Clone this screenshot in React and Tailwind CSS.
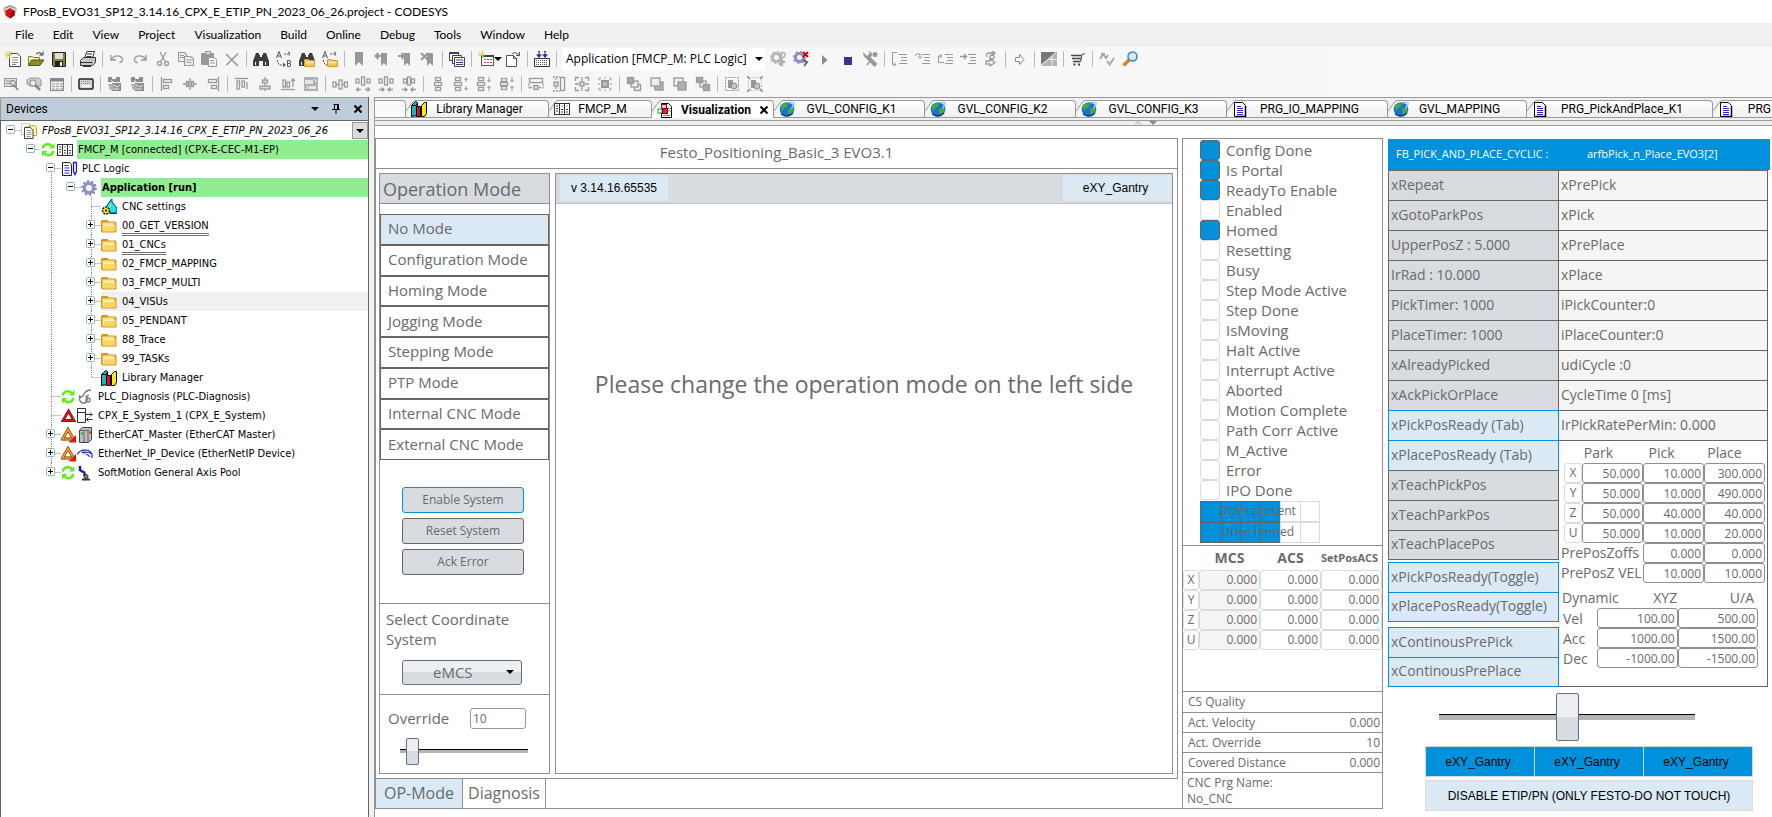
import React from "react";

const G = "#989898";
const D = "#555";

function Svg({ children, w = 16, h = 16, className = "" }) {
  return (
    <svg width={w} height={h} viewBox={`0 0 ${w} ${h}`} fill="none" className={`shrink-0 ${className}`} aria-hidden="true">
      {children}
    </svg>
  );
}

const pageLines = (c) => <path d="M5.5 7.5h5M5.5 9.500h5M5.5 11.500h5M5.5 13.500h4" stroke={c} />;
const binoc = (
  <g fill="#3c3c3c">
    <path d="M3 2h3v2h1v2h2V4h1V2h3l3 8v5h-6v-5H6v5H0v-5z" />
    <path d="M2.500 11v3M12.500 11v3" stroke="#fff" />
  </g>
);
const abSwap = (
  <g>
    <path d="M.5 7L3 .5 5.500 7M1.500 5h3" stroke={D} />
    <path d="M11.500 9.500v6H14q1.500-1.500 0-3h-2.500M11.500 9.500H14q1.300 1.500 0 3" stroke={D} />
    <path d="M8 3h4l2-1M12 1l2 1-1 3M1.500 9v2l2 3h3" stroke={D} strokeDasharray="2 1" />
    <path d="M7 11.500l3 2.500-3 2z" fill={D} />
  </g>
);
const folderBadge = (
  <g>
    <path d="M5.500 8.500h4l1 1h5v6h-10z" fill="#f6c85a" stroke="#d99a2b" />
    <path d="M6.500 11.500h8" stroke="#fdeeb8" strokeWidth="1.500" />
  </g>
);
const bookmark = <path d="M4 1h8v14l-4-4-4 4z" fill={G} />;
const boxV = (y, x = 5, w = 6, h = 3) => <rect x={x + 0.5} y={y + 0.5} width={w - 1} height={h} stroke={G} strokeWidth="1.300" />;
const stepLines = <path d="M8 3.500h8M10 6.500h6M10 9.500h6M8 12.500h8" stroke={G} />;
const gear = (c) => (
  <g>
    <circle cx="6.500" cy="6.500" r="4" stroke={c} strokeWidth="3" />
    <circle cx="6.500" cy="6.500" r="5.800" stroke={c} strokeWidth="1.500" strokeDasharray="2.200 2.300" />
  </g>
);

const T = {
  new: <g><path d="M4.500 2.500h8l3 3v10h-11z" fill="#fff" stroke="#444" /><path d="M7 6.500h6M7 9h6M7 11.500h6M7 13.500h4" stroke="#888" /><path d="M0 .5l6 6M4.500 0v7M0 4h7M1 7.500L7 1" stroke="#c3c032" /></g>,
  open: <g><path d="M.5 14.500v-9h4l1 1h6v3" fill="#f3efa2" stroke="#85802c" /><path d="M.5 14.500l3-5.500h12.500l-4 5.500z" fill="#8d8a30" stroke="#55521c" /><path d="M8 3q3-3 6 0M15 .5v3.500h-3.500" stroke="#333" /></g>,
  save: <g><path d="M1.500 1.500h13v14h-12l-1-1z" fill="#85812f" stroke="#222" /><rect x="4" y="2" width="8" height="6" fill="#ddd" /><rect x="4" y="10" width="8" height="5" fill="#222" /><rect x="9" y="11" width="2" height="4" fill="#fff" /></g>,
  print: <g><path d="M4.500 7L7 .5h7.500L12.500 7" fill="#fff" stroke="#333" /><path d="M.5 9.500l3-3h12v5l-3 3H.500z" fill="#c8c8c8" stroke="#333" /><path d="M1 11.500h11.500M7 3h5M6.500 5.500h5M3 15.500h8" stroke="#333" /><path d="M11 9.500h2" stroke="#c9b21c" /></g>,
  undo: <path d="M2 4v5h5M2.500 8.500C5 4 12 3.500 13.500 8c.5 2-1 3.500-3 3.500" stroke={G} strokeWidth="1.300" />,
  redo: <path d="M14 4v5H9M13.500 8.500C11 4 4 3.500 2.500 8c-.5 2 1 3.500 3 3.500" stroke={G} strokeWidth="1.300" />,
  cut: <g stroke={G} strokeWidth="1.300"><path d="M5 1l5 9M11 1l-5 9" /><circle cx="4.500" cy="12.500" r="2" /><circle cx="11.500" cy="12.500" r="2" /></g>,
  copy: <g stroke={G} strokeWidth="1.200" fill="#eee"><path d="M.5 1.500h6l2 2v7h-8z" /><path d="M6.500 5.500h6l3 2.500v6.500h-9z" /><path d="M2 4.500h4M2 6.500h4M8.500 9h5M8.500 11.500h5" /></g>,
  paste: <g><rect x="0" y="2" width="13" height="12" rx="1" fill={G} /><rect x="4.500" y=".5" width="5" height="3" fill="#ddd" stroke={G} /><path d="M7.500 6.500h5.500l2.500 2v7h-8z" fill="#f4f4f4" stroke={G} /><path d="M9 9.500h4M9 12h5" stroke={G} /></g>,
  del: <path d="M2 3l12 12M14 2.500L2.500 14" stroke={G} strokeWidth="1.600" />,
  find: binoc,
  replace: abSwap,
  findF: <g>{binoc}{folderBadge}</g>,
  replaceF: <g>{abSwap}{folderBadge}</g>,
  bm: bookmark,
  bmPrev: <g><path d="M7 2h6v13l-3-3-3 3z" fill={G} /><path d="M8 5H2M4.500 2L1.500 5l3 3" stroke={G} strokeWidth="2" /></g>,
  bmNext: <g><path d="M7 2h6v13l-3-3-3 3z" fill={G} /><path d="M1 5h6M4.500 2l3 3-3 3" stroke={G} strokeWidth="2" /></g>,
  bmClear: <g><path d="M7 2h6v13l-3-3-3 3z" fill={G} /><path d="M1 2l7 7M8 2L1 9" stroke={G} strokeWidth="2" /></g>,
  windows: <g stroke="#444"><path d="M.5 1.500h9v8h-9z" fill="#fff" /><path d="M.5 2h9" strokeWidth="2" /><path d="M3.500 4.500h9v8h-9z" fill="#fff" /><path d="M5.500 6.500h10v9h-10z" fill="#fff" /><path d="M7 9h7M7 11.500h7M7 13.500h7" stroke="#3a3a9a" /></g>,
  gridNew: <g><rect x="3.500" y="4.500" width="12" height="10" fill="#fff" stroke="#555" /><path d="M3 5h13" stroke="#444" strokeWidth="2" /><path d="M6 8.500h8" stroke="#27a" strokeDasharray="2 1" /><path d="M6 11.500h8" stroke="#c44" strokeDasharray="2 1" /><path d="M0 .5l6 6M4.500 0v7M0 4h7" stroke="#d4c71f" /></g>,
  page: <g stroke="#555"><path d="M1.500 4.500h7l3 3v8h-10z" fill="#fff" /><path d="M8.500 4.500v3h3M7 3q3-3 7 1M14.500 1v3.500H11" /></g>,
  build: <g><path d="M.5 7.500h15v8H.500z" fill="#fff" stroke="#333" /><path d="M2 9.500h12M2 11.500h12M2 13.500h12" stroke="#555" strokeDasharray="1 1" /><path d="M5 0v4M11 0v4" stroke="#338" strokeWidth="2" strokeDasharray="1.500 1" /><path d="M2 3.500h6l-3 3.500zM8 3.500h6l-3 3.500z" fill="#223399" /></g>,
  login: <g>{gear("#b8b8b8")}<circle cx="12.500" cy="4" r="2.500" stroke="#b0b0b0" strokeWidth="1.500" /><path d="M10 9l4 2-4 2 3 2" stroke="#aaa" strokeWidth="2" /></g>,
  logout: <g>{gear("#8c8fc4")}<path d="M10 1l5 5M15 1l-5 5" stroke="#d40000" strokeWidth="2" /><path d="M10 9l4 2-3 4" stroke="#666" strokeWidth="2" /></g>,
  play: <path d="M6 4v10l5.500-5z" fill="#8a8a8a" />,
  stop: <rect x="5" y="6" width="8" height="8" fill="#33339b" />,
  wrench: <g><path d="M6 6.500l8 8" stroke={G} strokeWidth="4" /><path d="M1 1l4 4 3-3-2-2q4 0 4 4-1 4-5 4-4-2-4-7z" fill={G} /><circle cx="13" cy="3.500" r="2.500" fill={G} /><path d="M8 10l-3 4" stroke={G} strokeWidth="1.500" /></g>,
  st1: <g>{stepLines}<path d="M6 1.500H1.500v12h3M3 11.500l2 2-2 2" stroke={G} /></g>,
  st2: <g>{stepLines}<path d="M1 5q1-3 5-2v4M4 5.500l2 2 2-2" stroke={G} /></g>,
  st3: <g>{stepLines}<path d="M7 11.500H1.500V5h3M3 3l2 2-2 2" stroke={G} /></g>,
  st4: <g>{stepLines}<path d="M0 5.500h6.500M4 3l2.500 2.500L4 8" stroke={G} strokeWidth="1.300" /></g>,
  st5: <g stroke={G} strokeWidth="1.300"><path d="M4 6q-2-4 3-4h4M9 0l3 2-3 2.500" /><circle cx="9" cy="6" r="2" /><path d="M3 10h4V8l5 3.500L7 15v-2H3z" /></g>,
  arrow: <path d="M3.500 6.500h4v-3l4.500 5-4.500 5v-3h-4z" stroke="#888" fill="#fff" />,
  flow: <g><rect y="1" width="16" height="14" fill="#b5b5b5" /><path d="M0 1h16L0 13z" fill="#777" /><path d="M0 15L15 1M8 8.500h8M11 5v10" stroke="#eee" /></g>,
  cart: <g stroke="#444"><path d="M1 4.500h10M2 7.500h9M3 10.500h7" strokeWidth="1.500" /><path d="M10.500 11L12 3.500l3-1" /><path d="M3.500 13.500h2M8 13.500h2" strokeWidth="2" /></g>,
  chk: <g stroke="#a8a8a8" strokeWidth="2"><path d="M1 8l3-5 3 4 2-3M2 3h4M8 10l2.500 3.500L15 7" /></g>,
  lens: <g><path d="M1.500 14.500L7 9" stroke="#d9822b" strokeWidth="3.500" /><circle cx="10.500" cy="5.500" r="4.500" fill="#cfeaf8" stroke="#4a7fb0" strokeWidth="1.500" /></g>,

  v1: <g><rect x="1.500" y="2.500" width="12" height="8" fill="#ddd" stroke={G} /><path d="M3 5h6M3 7.500h4" stroke={G} /><circle cx="10" cy="7" r="2.500" stroke="#888" /><path d="M11 9l4 5" stroke="#888" strokeWidth="2" /></g>,
  v2: <g><path d="M1 4l3-2h9l2 2v6H4L1 8z" fill="#ccc" stroke={G} /><circle cx="7" cy="7" r="3" fill="#eee" stroke="#888" /><path d="M9 9l5 5" stroke="#888" strokeWidth="2.500" /></g>,
  v3: <g><rect x="1.500" y="2.500" width="13" height="12" fill="#eee" stroke="#888" /><path d="M1 4h14" stroke="#888" strokeWidth="3" /><path d="M3 8h3M7 8h3M11 8h3M3 10.500h3M7 10.500h3M11 10.500h3M3 13h3M7 13h3M11 13h3" stroke={G} /></g>,
  kb: <g><rect x="1" y="3" width="14" height="10" rx="1" fill="#d8d8d8" stroke="#222" strokeWidth="1.500" /><path d="M3 5.500h10M3 7.500h10" stroke="#888" strokeDasharray="1 1" /><path d="M4 10h8" stroke="#fff" strokeWidth="2" /></g>,
  rb: <g fill="#8d8d8d"><path d="M1 1h4v2h4V1h4v5H1zM5 7h9v8H5z" /><path d="M1 8h6v6H3z" fill="#b0b0b0" /><path d="M7 9l3 2 3-2M4 4l2 2M7 13h5" stroke="#eee" /></g>,
  al: <g stroke={G} strokeWidth="1.300"><path d="M2.500 1v14" /><rect x="4.500" y="3.500" width="8" height="3" /><rect x="4.500" y="9.500" width="5" height="3" /></g>,
  ac: <g stroke={G} strokeWidth="1.300"><path d="M1 8h3M12 8h3M8 2v12" /><rect x="4.500" y="5.500" width="2" height="5" fill="#ddd" /><rect x="9.500" y="5.500" width="2" height="5" fill="#ddd" /></g>,
  ar: <g stroke={G} strokeWidth="1.300"><path d="M13.500 1v14" /><rect x="3.500" y="3.500" width="8" height="3" /><rect x="6.500" y="9.500" width="5" height="3" /></g>,
  at: <g stroke={G} strokeWidth="1.300"><path d="M1 2.500h13" /><rect x="3" y="5" width="2.500" height="8" /><rect x="8" y="5" width="2.500" height="6" /><path d="M13 6v7" /></g>,
  am: <g stroke={G} strokeWidth="1.300"><path d="M8 1v3M8 7v3M8 13v2" /><rect x="5.500" y="4" width="5" height="3" fill="#ddd" /><rect x="3" y="10" width="10" height="3" fill="#ddd" /></g>,
  ab: <g stroke={G} strokeWidth="1.300"><path d="M1 13.500h14" /><rect x="3" y="4" width="2.500" height="7" /><rect x="7" y="6" width="2.500" height="5" /><path d="M13 3v8M11 5l2-2 2 2" /></g>,
  pic: <g><rect x="1" y="1" width="14" height="14" fill="#b0b0b0" /><path d="M2 4h8v4H2zM6 10h7v3H6z" fill="#e6e6e6" /><path d="M11 3l3 3M3 13l2-3" stroke="#fff" /></g>,
  h1: <g stroke={G} strokeWidth="1.300"><rect x="1" y="6" width="3" height="5" /><rect x="7" y="4" width="3" height="9" /><rect x="12.500" y="6" width="3" height="5" /><path d="M4 8.500h3M10 8.500h2" /></g>,
  h2: <g stroke={G} strokeWidth="1.300"><rect x="1" y="3" width="3" height="4" /><rect x="6.500" y="1" width="3" height="8" /><rect x="12" y="3" width="3" height="4" /><path d="M6 13.500H1.500M3.500 11.500l-2 2 2 2M10 13.500h4.500M12.500 11.500l2 2-2 2" /></g>,
  h3: <g stroke={G} strokeWidth="1.300"><rect x="1" y="3" width="3" height="4" /><rect x="6.500" y="1" width="3" height="8" /><rect x="12" y="3" width="3" height="4" /><path d="M1 13.500h5M4 11.500l2 2-2 2M15 13.500h-5M12 11.500l-2 2 2 2" /></g>,
  h4: <g stroke={G} strokeWidth="1.300"><rect x="2.500" y="3" width="3" height="4" /><rect x="6.500" y="1" width="3" height="8" /><rect x="10.500" y="3" width="3" height="4" /><path d="M1 13.500h5M4 11.500l2 2-2 2M15 13.500h-5M12 11.500l-2 2 2 2" /></g>,
  s1: <g>{boxV(1)}{boxV(6, 4, 8)}{boxV(11)}<path d="M8 4.500v2M8 9.500v2" stroke={G} /></g>,
  s2: <g>{boxV(1, 2)}{boxV(6, 1, 8)}{boxV(11, 2)}<path d="M13 2v4M11.500 4L13 2l1.500 2M13 14v-4M11.500 12l1.500 2 1.500-2" stroke={G} /></g>,
  s3: <g>{boxV(1, 2)}{boxV(6, 1, 8)}{boxV(11, 2)}<path d="M13 1v5M11.500 4l1.500 2 1.500-2M13 15v-5M11.500 12l1.500-2 1.500 2" stroke={G} /></g>,
  s4: <g>{boxV(2, 2)}{boxV(6, 1, 8)}{boxV(10, 2)}<path d="M13 1v5M11.500 4l1.500 2 1.500-2M13 15v-5M11.500 12l1.500-2 1.500 2" stroke={G} /></g>,
  w1: <g stroke={G} strokeWidth="1.300"><rect x="1.500" y="2.500" width="13" height="4" /><rect x="6" y="9.500" width="4" height="4" fill="#ddd" /><path d="M1 7.500v6M15 7.500v6M2 11.500h3M11 11.500h3" strokeDasharray="2 1" /></g>,
  w2: <g stroke={G} strokeWidth="1.300"><rect x="9.500" y="1.500" width="4" height="13" /><rect x="3" y="6" width="4" height="4" fill="#ddd" /><path d="M2 1h7M2 15h7M5 2v3M5 11v3" strokeDasharray="2 1" /></g>,
  w3: <g stroke={G} strokeWidth="1.300"><rect x="6" y="6" width="4" height="4" fill="#ddd" /><path d="M1.500 5V1.500H5M11 1.500h3.500V5M1.500 11v3.500H5M11 14.500h3.500V11M8 1v4M8 11v4M1 8h4M11 8h4" /></g>,
  w4: <g stroke={G} strokeWidth="1.300"><rect x="5" y="5" width="6" height="6" fill="#bbb" strokeWidth="2" /><path d="M3 1v2.500H1M13 1v2.500h2M3 15v-2.500H1M13 15v-2.500h2M8 1v2M8 13v2M1 8h2M13 8h2" opacity=".7" /></g>,
  o1: <g stroke={G} strokeWidth="1.300"><rect x="8.500" y="8.500" width="6" height="6" fill="#eee" /><rect x="5" y="5" width="7" height="6" fill="#eee" /><rect x="1.500" y="1.500" width="6" height="6" fill="#a8a8a8" /></g>,
  o2: <g stroke={G} strokeWidth="1.300"><rect x="6" y="6" width="8" height="8" fill="#b0b0b0" /><rect x="2" y="2" width="9" height="8" fill="#eee" /></g>,
  o3: <g stroke={G} strokeWidth="1.300"><rect x="2" y="2" width="9" height="8" fill="#eee" /><rect x="6" y="6" width="8" height="8" fill="#b0b0b0" /></g>,
  o4: <g stroke={G} strokeWidth="1.300"><rect x="5" y="5" width="6" height="6" fill="#eee" /><rect x="1.500" y="1.500" width="6" height="5" fill="#a8a8a8" /><rect x="8.500" y="8.500" width="6" height="6" fill="#a8a8a8" /></g>,
  g1: <g><rect x="1.500" y="1.500" width="13" height="13" stroke={G} strokeDasharray="2 1" /><path d="M4 4h5v8H4z" fill="#999" /><circle cx="10" cy="10" r="3" fill="#c5c5c5" stroke="#888" /></g>,
  g2: <g><rect x="1.500" y="1.500" width="13" height="13" stroke={G} strokeDasharray="1 2" /><path d="M4 4h5v8H4z" fill="#999" /><circle cx="10" cy="10" r="3" fill="#c5c5c5" stroke="#888" /><path d="M0 0l3 3M16 0l-3 3M0 16l3-3M16 16l-3-3" stroke="#888" strokeWidth="1.500" /></g>,
};

const caret = (
  <svg width="8" height="4" viewBox="0 0 8 4" className="shrink-0" aria-hidden="true">
    <path d="M0 0h8L4 4z" fill="#000" />
  </svg>
);

function Tool({ id }) {
  return (
    <button type="button" aria-label={id} className="flex h-5 w-[17px] shrink-0 items-center justify-center">
      <Svg>{T[id]}</Svg>
    </button>
  );
}
const Tools = ({ ids }) =>
  ids.split(" ").map((id, i) =>
    id === "|" ? <span key={i} className="-mr-px h-4 w-px shrink-0 bg-[#b8b8b8]" /> : <Tool key={i} id={id} />
  );

const books = (
  <g stroke="#000">
    <path d="M.5 4.500l4-4 2 1v13l-6 1z" fill="#19b5bd" />
    <path d="M5.500 5.500h4v10h-4z" fill="#e01010" />
    <path d="M10.500 4.500l3-3h2v11l-2 3h-3z" fill="#f4ee10" />
    <path d="M.5 4.500h5M7 2l-3 3" />
  </g>
);
const plc = (
  <g stroke="#333">
    <rect x=".5" y="2.500" width="15" height="11" fill="#fff" />
    <path d="M5.500 3v10M10.500 3v10M2 5h2M2 7.500h2M2 10h2M7 8.500h2M12 8.500h2M7 11h2M12 11h2" />
    <path d="M7 5h2M12 5h2" stroke="#999" />
  </g>
);
const globe = (
  <g>
    <circle cx="8" cy="8.500" r="7.300" fill="#1e6fd0" />
    <path d="M2 5q3-4 7-3l-1 4-3 1-1 3-2-2zM9 8l3-1 3 2-3 5-3-1z" fill="#3fae3f" />
    <path d="M2 13q6 4 12-1" stroke="#0c3a86" strokeWidth="1.500" />
    <path d="M9 1.500q6-1 6.500 1l-3 5" stroke="#8fd4ff" strokeWidth="1.500" />
  </g>
);
const doc = (
  <g>
    <path d="M2.500 1.500h8l3 3v11h-11z" fill="#fff" stroke="#000" />
    <path d="M5 5.500h4M5 7.500h6M5 9.500h6M5 11.500h6M5 13.500h6" stroke="#2222dd" />
    <path d="M13.500 5v10.500h-9" stroke="#000" strokeWidth="1.500" />
  </g>
);
const visu = (
  <g>
    <path d="M4.500 1.500h7l3 3v11h-10z" fill="#fff" stroke="#000" />
    <path d="M11 6.500h3M11 9h3M6 13.500h7" stroke="#888" />
    <rect x="4.500" y="2.500" width="5" height="4" fill="#f4e020" stroke="#806" />
    <rect x="1" y="7" width="4" height="4" fill="#fff" stroke="#1aa01a" />
    <rect x="5.500" y="6.500" width="5" height="5" fill="#e02040" stroke="#702" />
  </g>
);

const TABS = [
  { t: "Library Manager", i: books, w: "w-[143px]" },
  { t: "FMCP_M", i: plc, w: "w-[103px]" },
  { t: "Visualization", i: visu, w: "w-[122px]", active: true },
  { t: "GVL_CONFIG_K1", i: globe, w: "w-[151px]" },
  { t: "GVL_CONFIG_K2", i: globe, w: "w-[151px]" },
  { t: "GVL_CONFIG_K3", i: globe, w: "w-[151px]" },
  { t: "PRG_IO_MAPPING", i: doc, w: "w-[161px]" },
  { t: "GVL_MAPPING", i: globe, w: "w-[139px]" },
  { t: "PRG_PickAndPlace_K1", i: doc, w: "w-[186px]" },
  { t: "PRG", i: doc, w: "min-w-0 flex-1", last: true },
];

function DocTabs() {
  return (
    <div role="tablist" className="flex h-[23px] overflow-hidden border-t border-[#9a9a9a] bg-[#f0f0f0] pt-0.5">
      <div className="h-[18px] w-[31px] shrink-0 rounded-tr border-y border-r border-[#9a9a9a] bg-[#fafafa]" />
      {TABS.map(({ t, i, w, active, last }) => (
        <button
          key={t}
          type="button"
          role="tab"
          aria-selected={!!active}
          className={`flex h-[18px] items-center ${last ? "" : "shrink-0"} ${w}`}
        >
          <Svg w={9} h={18}>
            <path d="M0 18L9 .5V18z" fill={active ? "#fff" : "#f8f8f8"} />
            <path d="M0 11L7 1.500 9 .5" stroke="#9a9a9a" />
            {!active && <path d="M0 17.500h9" stroke="#9a9a9a" />}
          </Svg>
          <span
            className={`flex h-[18px] min-w-0 flex-1 items-center border-t border-[#9a9a9a] ${last ? "" : "rounded-tr border-r"} ${
              active ? "bg-white" : "border-b bg-linear-to-b from-white to-[#f0f0f0]"
            }`}
          >
            <Svg className="-ml-1">{i}</Svg>
            <span
              className={`flex-1 text-[12px] whitespace-nowrap text-black ${last ? "pr-px text-right" : "text-center"} ${active ? "font-bold" : last ? "" : "pr-4"}`}
            >
              {t}
            </span>
            {active && (
              <Svg w={10} h={10} className="mr-1">
                <path d="M1.500 1.500l7 7M8.500 1.500l-7 7" stroke="#000" strokeWidth="2" />
              </Svg>
            )}
          </span>
        </button>
      ))}
    </div>
  );
}

/* ---- device tree ---- */
const I = {
  project: <g><path d="M.5.5h8v3h-4v8h-4z" stroke="#999" strokeDasharray="1 1" /><path d="M8.500 2.500h5l2 2v8h-7z" fill="#fdf7b0" stroke="#b7a93c" /><path d="M3.500 4.500h6l2.500 2.500v8.500H3.500z" fill="#fff" stroke="#444" />{pageLines("#999")}</g>,
  plc,
  books,
  logic: <g><path d="M1.500 1.500h7l2 2v11h-9z" fill="#fff" stroke="#222" /><path d="M3.500 4.500h4M3.500 7h5M3.500 9.500h5M3.500 12h5" stroke="#33c" /><path d="M12.500 1.500h3v9l-1.500 3-1.500-3z" fill="#fff" stroke="#11f" strokeWidth="1.300" /></g>,
  gear: <g><circle cx="8" cy="8" r="4.700" stroke="#8f92c6" strokeWidth="3.400" /><circle cx="8" cy="8" r="7" stroke="#77799f" strokeWidth="1.600" strokeDasharray="2 2.400" /></g>,
  cnc: <g><path d="M4 10L9 2l2-2v3l5 6v5H8z" fill="#1ee3ea" stroke="#044" /><path d="M10 5l-3 6" stroke="#fff" /><circle cx="5" cy="11.500" r="3.500" fill="#f1e21c" stroke="#111" strokeWidth="1.500" strokeDasharray="2 1" /><circle cx="5" cy="11.500" r="1" fill="#000" /><path d="M9 14.500h6.500" stroke="#222" /></g>,
  folder: <g><path d="M0 3.500Q0 2 1.500 2h5L8 3.500h6q1.500 0 1.500 1.500v8.500q0 1-1 1H2q-2 0-2-2z" fill="#d99420" /><path d="M1.500 4.500h12v9H3q-1.500 0-1.500-1.500z" fill="#fde58d" /><path d="M3 7h11.500v6H3.500z" fill="#fbd560" /><path d="M3 7.500h10" stroke="#fff6c8" /></g>,
  sync: <g stroke="#5fee1c" strokeWidth="2.400"><path d="M1.500 6.500Q3 2 7.500 2.300q2 .2 3.500 2M12.500 9Q11 13.500 7 13.200q-2-.2-3.500-2" /><path d="M13.500 1v5.500H8zM1 14.500V9h5.500z" fill="#5fee1c" strokeWidth="0" /></g>,
  diag: <g stroke="#777" strokeWidth="1.300"><path d="M14 1Q9 1 7 5q-1 3-5 4M3 6q-2 5 2 8 4 1 5-3 1-3-1-4M8 8l4-2" /><circle cx="11" cy="11" r="2" /></g>,
  sys: <g stroke="#333"><path d="M.5.5h8v14h-8zM.5 4.500h8" fill="#fff" /><path d="M9 6.500h6.500M13 4.500l2 2-2 2M15.500 11.500h-6M11.500 9.500l-2 2 2 2" /></g>,
  red: <g><path d="M7.500 3L13 12.500H2z" fill="#fff" stroke="#7d0f12" strokeWidth="2.800" /><path d="M7.500 3L13 12.500H2z" stroke="#d92020" strokeWidth="1.200" /></g>,
  warn: <g><path d="M7 2.500L12.500 12H1.500z" fill="#fff" stroke="#4c2c05" strokeWidth="2.800" /><path d="M7 2.500L12.500 12H1.500z" stroke="#ff9c1a" strokeWidth="1.700" /><path d="M15 8v7.500H7.500z" fill="#f01010" /></g>,
  master: <g><path d="M2.500 3l3-2.500h9v12l-3 3h-9z" fill="#bdbdbd" stroke="#444" /><path d="M7 4v11M11 4v11M3 3.500h9" stroke="#666" /><path d="M4 6.500h2" stroke="#1bbb1b" strokeWidth="2" /><path d="M12 5.500h2" stroke="#e22" strokeWidth="2" /></g>,
  eip: <g><circle cx="7" cy="6" r="2.500" fill="#f3c10c" /><path d="M0 8.500Q3 4 8 4t7 4M5 6.500q8-1 10 1.500v4M9 8.500q3 0 3.500 2.500" stroke="#1717cc" strokeWidth="1.100" /></g>,
  axis: <g><path d="M3 1v4l5 3" stroke="#1717cc" strokeWidth="2.500" /><path d="M8 8l-1 3" stroke="#222" strokeWidth="2" /><path d="M5 14.500h8" stroke="#333" strokeWidth="2" /><circle cx="9" cy="11.500" r="2" fill="#888" stroke="#222" /></g>,
};

/* guides: "." blank, "|" line, "T" branch, "L" last branch, "+"/"-" expander; "u"/"d" add trunk above/below */
const NODES = [
  { g: ["-"], i: ["project"], t: "FPosB_EVO31_SP12_3.14.16_CPX_E_ETIP_PN_2023_06_26", italic: true },
  { g: [".", "-"], i: ["sync", "plc"], t: "FMCP_M [connected] (CPX-E-CEC-M1-EP)", run: true },
  { g: [".", ".", "-d"], i: ["logic"], t: "PLC Logic" },
  { g: [".", ".", "|", "-"], i: ["gear"], t: "Application [run]", run: true, bold: true },
  { g: [".", ".", "|", ".", "T"], i: ["cnc"], t: "CNC settings" },
  { g: [".", ".", "|", ".", "+ud"], i: ["folder"], t: "00_GET_VERSION", dbl: true },
  { g: [".", ".", "|", ".", "+ud"], i: ["folder"], t: "01_CNCs", dbl: true },
  { g: [".", ".", "|", ".", "+ud"], i: ["folder"], t: "02_FMCP_MAPPING" },
  { g: [".", ".", "|", ".", "+ud"], i: ["folder"], t: "03_FMCP_MULTI" },
  { g: [".", ".", "|", ".", "+ud"], i: ["folder"], t: "04_VISUs", sel: true },
  { g: [".", ".", "|", ".", "+ud"], i: ["folder"], t: "05_PENDANT" },
  { g: [".", ".", "|", ".", "+ud"], i: ["folder"], t: "88_Trace" },
  { g: [".", ".", "|", ".", "+ud"], i: ["folder"], t: "99_TASKs" },
  { g: [".", ".", "|", ".", "L"], i: ["books"], t: "Library Manager" },
  { g: [".", ".", "T"], i: ["sync", "diag"], t: "PLC_Diagnosis (PLC-Diagnosis)" },
  { g: [".", ".", "T"], i: ["red", "sys"], t: "CPX_E_System_1 (CPX_E_System)" },
  { g: [".", ".", "+ud"], i: ["warn", "master"], t: "EtherCAT_Master (EtherCAT Master)" },
  { g: [".", ".", "+ud"], i: ["warn", "eip"], t: "EtherNet_IP_Device (EtherNetIP Device)" },
  { g: [".", ".", "+u"], i: ["sync", "axis"], t: "SoftMotion General Axis Pool" },
];

function Guide({ k }) {
  const box = k[0] === "+" || k[0] === "-";
  const up = "|TL".includes(k) || k.includes("u");
  const down = "|T".includes(k) || k.includes("d");
  const right = k === "T" || k === "L" || box;
  return (
    <Svg w={20} h={19}>
      <g stroke="#8a8a8a" strokeDasharray="1 1">
        {up && <path d="M10.500 0v9" />}
        {down && <path d="M10.500 10v9" />}
        {right && <path d="M10.500 9.500H20" />}
      </g>
      {box && (
        <g>
          <rect x="5.500" y="4.500" width="8" height="8" rx="1" fill="#fff" stroke="#8fb4b8" />
          <path d="M7 8.500h5" stroke="#000" />
          {k[0] === "+" && <path d="M9.500 6v5" stroke="#000" />}
        </g>
      )}
    </Svg>
  );
}

const TREE = '"DejaVu Sans Condensed", "DejaVu Sans", sans-serif';
const ARIAL = '"Liberation Sans", Arial, sans-serif';
const SEGOE = '"Open Sans", "Noto Sans", sans-serif';
const CHROME = 'Lato, "Open Sans", sans-serif';

function DeviceTree() {
  return (
    <aside className="flex w-[369px] shrink-0 flex-col border-r border-[#646464]">
      <header className="flex h-[23px] items-center border-t border-l border-[#9a9a9a] bg-[#bfcddb] px-[5px] text-[12px] text-black">
        <h2 className="flex-1">Devices</h2>
        <button type="button" aria-label="Panel menu" className="mr-3">{caret}</button>
        <button type="button" aria-label="Pin" className="mr-3">
          <Svg w={10} h={10}><path d="M3.500 0v5.500h4V0M2.500.5h5M6.500 1v4M1 5.500h8M5 6v4" stroke="#000" /></Svg>
        </button>
        <button type="button" aria-label="Close">
          <Svg w={10} h={10}><path d="M1.500 1.500l7 7M8.500 1.500l-7 7" stroke="#000" strokeWidth="2" /></Svg>
        </button>
      </header>
      <ul className="flex-1 border-t border-l border-[#646464] bg-white text-[11px] text-black" style={{ fontFamily: TREE }}>
        {NODES.map((n) => (
          <li key={n.t} className="flex h-[19px] items-center whitespace-nowrap">
            {n.g.map((k, i) => <Guide key={i} k={k} />)}
            <span className={`flex h-[19px] items-center ${n.sel ? "min-w-0 flex-1 bg-[#f0f0f0]" : n.run ? "min-w-0 flex-1" : "min-w-0"}`}>
              {n.i.map((k) => <Svg key={k}>{I[k]}</Svg>)}
              <span
                className={`ml-1 flex h-[19px] items-center px-px pt-0.5 ${n.run ? "flex-1 bg-[#90ee90]" : ""} ${n.bold ? "font-bold" : ""} ${n.italic ? "italic" : ""}`}
              >
                <span className={n.dbl ? "border-b-3 border-double border-[#707070] pt-0.5 leading-[14px]" : ""}>{n.t}</span>
              </span>
            </span>
            {n.italic && (
              <button type="button" aria-label="Project menu" className="ml-auto flex h-[17px] w-4 shrink-0 items-center justify-center border border-[#999] bg-[#dcdcdc]">
                {caret}
              </button>
            )}
          </li>
        ))}
      </ul>
    </aside>
  );
}

/* ---- visualization ---- */
const MODES = ["No Mode", "Configuration Mode", "Homing Mode", "Jogging Mode", "Stepping Mode", "PTP Mode", "Internal CNC Mode", "External CNC Mode"];

const thumb =
  "[&::-webkit-slider-thumb]:appearance-none [&::-webkit-slider-thumb]:rounded-xs [&::-webkit-slider-thumb]:border [&::-webkit-slider-thumb]:border-[#5f6e82] [&::-webkit-slider-thumb]:bg-[linear-gradient(#eceef0_50%,#d8dbe0_50%)]";

function OperationPanel() {
  return (
    <section className="flex w-[171px] shrink-0 flex-col border border-[#8e8e8e] text-[#6a6a6a]">
      <h2 className="h-[30px] border-b border-[#8e8e8e] bg-[#d8dbe0] pl-[3px] text-[18px] leading-[30px]">Operation Mode</h2>
      <div className="mt-2.5 grid h-[246px] auto-rows-fr">
        {MODES.map((m, i) => (
          <button key={m} type="button" className={`border border-[#666] pb-0.5 pl-[7px] text-left text-[15px] leading-6 ${i === 0 ? "bg-[#dbe9f5]" : "bg-white"}`}>
            {m}
          </button>
        ))}
      </div>
      <div className="mt-[27px] flex flex-col gap-[5px] pr-[25px] pl-[22px] text-[12px]">
        {["Enable System", "Reset System", "Ack Error"].map((b, i) => (
          <button key={b} type="button" className={`h-[26px] rounded-[3px] border bg-[#d8dbe0] ${i === 0 ? "border-[#0091dc]" : "border-[#666]"}`}>
            {b}
          </button>
        ))}
      </div>
      <div className="mt-7 h-[91px] border-t border-[#8e8e8e] pt-[5px]">
        <label htmlFor="cs" className="block pl-1.5 text-[15px] leading-5">Select Coordinate System</label>
        <div className="relative mt-[11px] mr-[27px] ml-[22px]">
          <select id="cs" className="block h-[25px] w-full appearance-none rounded-[3px] border border-[#5f6e82] bg-[linear-gradient(#eceef0_50%,#d8dbe0_50%)] pl-[30px] text-[15px]">
            <option>eMCS</option>
          </select>
          <span className="pointer-events-none absolute top-2.5 right-2">{caret}</span>
        </div>
      </div>
      <div className="flex-1 border-t border-[#8e8e8e] pt-[13px]">
        <div className="flex h-[21px] items-center pl-2 text-[15px]">
          <label htmlFor="ovr" className="w-[82px]">Override</label>
          <input id="ovr" defaultValue="10" className="h-[21px] w-14 rounded-[3px] border border-[#999] px-0.5 text-[12px]" />
        </div>
        <input
          type="range"
          aria-label="Override"
          min="0"
          max="200"
          defaultValue="10"
          className={`mt-2 ml-5 block h-7 w-32 appearance-none bg-transparent [&::-webkit-slider-runnable-track]:h-1 [&::-webkit-slider-runnable-track]:border-t [&::-webkit-slider-runnable-track]:border-black [&::-webkit-slider-runnable-track]:bg-[#b4b4b4] [&::-webkit-slider-thumb]:-mt-3 [&::-webkit-slider-thumb]:h-[27px] [&::-webkit-slider-thumb]:w-[13px] ${thumb}`}
        />
      </div>
    </section>
  );
}

const LEDS = ["Config Done", "Is Portal", "ReadyTo Enable", "Enabled", "Homed", "Resetting", "Busy", "Step Mode Active", "Step Done", "IsMoving", "Halt Active", "Interrupt Active", "Aborted", "Motion Complete", "Path Corr Active", "M_Active", "Error", "IPO Done"];
const ON = ["Config Done", "Is Portal", "ReadyTo Enable", "Homed"];

function DriveBar({ label }) {
  return (
    <div className="relative flex h-[21px]">
      {[1, 1, 1, 1, 0, 0].map((on, i) => (
        <span key={i} className={`w-5 border-y border-l ${i === 5 ? "border-r" : ""} ${on ? "border-[#666] bg-[#0091dc]" : "border-[#d8dbe0] bg-white"}`} />
      ))}
      <span className="absolute inset-0 pr-1 text-center text-[12px] leading-5">{label}</span>
    </div>
  );
}

function StatusPanel() {
  const cell = "h-5 rounded-[3px] border border-[#d8dbe0] pr-0.5 text-right";
  return (
    <section className="mt-3 flex h-[671px] w-[201px] shrink-0 flex-col border border-[#8e8e8e] text-[15px] text-[#6a6a6a]">
      <ul className="mt-px pl-[17px]">
        {LEDS.map((l) => (
          <li key={l} className="flex h-5 items-center gap-1.5">
            <span className={`h-5 w-5 rounded-[3px] border ${ON.includes(l) ? "border-[#666] bg-[#0091dc]" : "border-[#d8dbe0] bg-white"}`} />
            <span className="leading-5">{l}</span>
          </li>
        ))}
      </ul>
      <div className="mt-px w-[137px] pl-[17px]">
        <DriveBar label="Drive present" />
        <DriveBar label="Drive homed" />
      </div>
      <div className="mt-0.5 flex-1 border-t border-[#8e8e8e]">
        <table className="w-full table-fixed border-separate border-spacing-0 text-[12px] leading-[18px]">
          <colgroup><col className="w-4" /><col /><col /><col /></colgroup>
          <thead>
            <tr className="h-6 text-[14px]">
              <th />
              <th>MCS</th>
              <th>ACS</th>
              <th className="pr-1 text-[11px]">SetPosACS</th>
            </tr>
          </thead>
          <tbody>
            {["X", "Y", "Z", "U"].map((a) => (
              <tr key={a}>
                <td className="h-5 rounded-[3px] border border-[#d8dbe0] text-center">{a}</td>
                <td className={`${cell} bg-[#f5f5f5]`}>0.000</td>
                <td className={cell}>0.000</td>
                <td className={cell}>0.000</td>
              </tr>
            ))}
          </tbody>
        </table>
      </div>
      <dl className="text-[12px] leading-5">
        {[["CS Quality", ""], ["Act. Velocity", "0.000"], ["Act. Override", "10"], ["Covered Distance", "0.000"]].map(([a, b]) => (
          <div key={a} className="flex justify-between border-t border-[#8e8e8e] pr-0.5 pl-[5px] leading-[19px] first:leading-5">
            <dt>{a}</dt>
            <dd>{b}</dd>
          </div>
        ))}
        <div className="h-9 border-t border-[#8e8e8e] pt-0.5 pl-1 leading-4">
          <dt>CNC Prg Name:</dt>
          <dd>No_CNC</dd>
        </div>
      </dl>
    </section>
  );
}

const LEFT = [
  ["xRepeat", "xGotoParkPos", "UpperPosZ : 5.000", "IrRad : 10.000", "PickTimer: 1000", "PlaceTimer: 1000", "xAlreadyPicked", "xAckPickOrPlace", "xPickPosReady (Tab)", "xPlacePosReady (Tab)", "xTeachPickPos", "xTeachParkPos", "xTeachPlacePos"],
  ["xPickPosReady(Toggle)", "xPlacePosReady(Toggle)"],
  ["xContinousPrePick", "xContinousPrePlace"],
];
const RIGHT = ["xPrePick", "xPick", "xPrePlace", "xPlace", "iPickCounter:0", "iPlaceCounter:0", "udiCycle :0", "CycleTime 0 [ms]", "IrPickRatePerMin: 0.000"];

const num = "block h-5 w-full rounded-[3px] border border-[#8e8e8e] bg-white pr-0.5 text-right text-[12px]";

function PickPlacePanel() {
  return (
    <section className="mt-[13px] w-[382px] shrink-0 text-[#6a6a6a]">
      <header className="flex h-[31px] items-center bg-[#0091dc] text-[11px] text-white">
        <span className="w-[191px] pl-2">FB_PICK_AND_PLACE_CYCLIC :</span>
        <span className="pl-2">arfbPick_n_Place_EVO3[2]</span>
      </header>
      <div className="mr-0.5 flex text-[14px]">
        <div className="flex w-[171px] shrink-0 flex-col">
          {LEFT.map((grp, gi) => (
            <div key={gi} className={gi === 0 ? "" : gi === 1 ? "mt-0.5" : "mt-[5px]"}>
              {grp.map((b) => {
                const hot = b.includes("Ready") || b.includes("Continous");
                return (
                  <button
                    key={b}
                    type="button"
                    className={`block h-[30px] w-full border-x border-t pb-0.5 pl-0.5 text-left leading-6 last:border-b ${
                      hot ? "border-[#0091dc] bg-[#dbe9f5]" : "border-[#666] bg-[#d8dbe0]"
                    }`}
                  >
                    {b}
                  </button>
                );
              })}
            </div>
          ))}
        </div>
        <div className="flex min-w-0 flex-1 flex-col border-r border-b border-[#666]">
          {RIGHT.map((r) => (
            <div key={r} className="h-[30px] border-t border-[#666] bg-[#f5f5f5] pl-0.5 leading-[27px]">{r}</div>
          ))}
          <div className="flex-1 border-t border-[#666] pl-0.5">
            <table className="w-[204px] table-fixed border-separate border-spacing-0">
              <colgroup><col className="w-[21px]" /><col /><col /><col /></colgroup>
              <thead>
                <tr className="h-[22px]">
                  <th />
                  <th className="pr-7 font-normal">Park</th>
                  <th className="pr-6 font-normal">Pick</th>
                  <th className="pr-5 font-normal">Place</th>
                </tr>
              </thead>
              <tbody>
                {[["X", "50.000", "10.000", "300.000"], ["Y", "50.000", "10.000", "490.000"], ["Z", "50.000", "40.000", "40.000"], ["U", "50.000", "10.000", "20.000"]].map(([a, ...v]) => (
                  <tr key={a}>
                    <td className="p-0 pl-[3px]"><span className="block h-5 rounded-[3px] border border-[#d8dbe0] text-center text-[12px] leading-[18px]">{a}</span></td>
                    {v.map((x, i) => <td key={i} className="p-0"><input aria-label={`${a} ${["Park", "Pick", "Place"][i]}`} defaultValue={x} className={num} /></td>)}
                  </tr>
                ))}
                {[["PrePosZoffs", "0.000", "0.000"], ["PrePosZ VEL", "10.000", "10.000"]].map(([a, ...v]) => (
                  <tr key={a}>
                    <th colSpan="2" className="p-0 text-left leading-5 font-normal whitespace-nowrap">{a}</th>
                    {v.map((x, i) => <td key={i} className="p-0"><input aria-label={`${a} ${["Pick", "Place"][i]}`} defaultValue={x} className={num} /></td>)}
                  </tr>
                ))}
              </tbody>
            </table>
            <table className="mt-[3px] w-[197px] table-fixed border-separate border-spacing-0">
              <colgroup><col className="w-9" /><col /><col /></colgroup>
              <thead>
                <tr className="h-[22px]">
                  <th className="overflow-visible pl-px text-left font-normal">Dynamic</th>
                  <th className="pl-14 font-normal">XYZ</th>
                  <th className="pr-1 text-right font-normal">U/A</th>
                </tr>
              </thead>
              <tbody>
                {[["Vel", "100.00", "500.00"], ["Acc", "1000.00", "1500.00"], ["Dec", "-1000.00", "-1500.00"]].map(([a, ...v]) => (
                  <tr key={a}>
                    <th className="p-0 pl-0.5 text-left leading-[19px] font-normal">{a}</th>
                    {v.map((x, i) => <td key={i} className="p-0"><input aria-label={`${a} ${["XYZ", "U/A"][i]}`} defaultValue={x} className={num} /></td>)}
                  </tr>
                ))}
              </tbody>
            </table>
          </div>
        </div>
      </div>
      <input
        type="range"
        aria-label="Gantry speed"
        className={`mt-1.5 ml-[51px] block h-12 w-64 appearance-none bg-transparent [&::-webkit-slider-runnable-track]:h-1.5 [&::-webkit-slider-runnable-track]:border-t [&::-webkit-slider-runnable-track]:border-black [&::-webkit-slider-runnable-track]:bg-[#b4b4b4] [&::-webkit-slider-thumb]:-mt-[22px] [&::-webkit-slider-thumb]:h-12 [&::-webkit-slider-thumb]:w-[23px] ${thumb}`}
      />
      <div className="mt-[5px] ml-[37px] w-[328px] text-[12px] text-black" style={{ fontFamily: ARIAL }}>
        <div className="grid grid-cols-3 border-l border-[#d0d8e0]">
          {[0, 1, 2].map((k) => (
            <button key={k} type="button" className="h-[31px] border-y border-r border-[#d0d8e0] bg-[#0091dc] pr-1">eXY_Gantry</button>
          ))}
        </div>
        <button type="button" className="mt-[3px] h-[31px] w-full border border-[#d8dbe0] bg-[#dbe9f5]">DISABLE ETIP/PN (ONLY FESTO-DO NOT TOUCH)</button>
      </div>
    </section>
  );
}

function Visualization() {
  return (
    <div className="flex flex-1 overflow-hidden bg-white" style={{ fontFamily: SEGOE }}>
      <div className="mt-3 flex h-[671px] min-w-0 flex-1 flex-col border-b border-[#8e8e8e]">
        <div className="mr-1 flex flex-1 flex-col border border-[#8e8e8e]">
          <h1 className="h-[30px] border-b border-[#8e8e8e] text-center text-[15px] leading-[26px] text-[#6a6a6a]">Festo_Positioning_Basic_3 EVO3.1</h1>
          <div className="flex flex-1 gap-[5px] py-1 pr-1 pl-[3px]">
            <OperationPanel />
            <section className="flex min-w-0 flex-1 flex-col border border-[#8e8e8e]">
              <div className="flex h-[30px] items-start justify-between border-b border-[#c0c3c8] bg-[#d8dbe0] pt-px pl-1 text-[12px] text-black" style={{ fontFamily: ARIAL }}>
                <button type="button" className="h-[26px] w-[108px] bg-[#dbe9f5]">v 3.14.16.65535</button>
                <button type="button" className="h-[26px] w-[109px] bg-[#dbe9f5] pr-1">eXY_Gantry</button>
              </div>
              <p className="pt-[164px] text-center text-[23px] leading-8 text-[#6a6a6a]">Please change the operation mode on the left side</p>
            </section>
          </div>
        </div>
        <div role="tablist" className="flex h-[29px] text-[16px] text-[#6a6a6a]">
          <button type="button" role="tab" aria-selected="true" className="w-[88px] border-r border-l border-[#8e8e8e] bg-[#dbe9f5] pb-0.5">OP-Mode</button>
          <button type="button" role="tab" aria-selected="false" className="w-[83px] border-r border-[#8e8e8e] pb-0.5">Diagnosis</button>
        </div>
      </div>
      <StatusPanel />
      <div className="w-[5px] shrink-0" />
      <PickPlacePanel />
      <div className="w-0.5 shrink-0" />
    </div>
  );
}

export default function App() {
  return (
    <div className="flex min-h-screen flex-col overflow-hidden bg-[#f0f0f0] text-[12px] text-black" style={{ fontFamily: 'Roboto, "Noto Sans", sans-serif' }}>
      <header className="flex h-[23px] items-center gap-[5px] bg-white pl-0.5" style={{ fontFamily: CHROME }}>
        <Svg>
          <path d="M8 1l7 3-3 1-4-2-4 2-3-1z" fill="#999" />
          <path d="M1 4l3 2v5L2 9zM15 4l-3 2v5l2-2z" fill="#bbb" />
          <path d="M8 4l4.500 2.500v5L8 14.500 3.500 11.500v-5z" fill="#d81414" />
          <path d="M8 9l4.500-2.500v5L8 14.500z" fill="#900808" />
        </Svg>
        <span>FPosB_EVO31_SP12_3.14.16_CPX_E_ETIP_PN_2023_06_26.project - CODESYS</span>
      </header>
      <nav className="flex h-6 items-center gap-[19px] pl-[15px]" style={{ fontFamily: CHROME }}>
        {["File", "Edit", "View", "Project", "Visualization", "Build", "Online", "Debug", "Tools", "Window", "Help"].map((m) => (
          <button key={m} type="button">{m}</button>
        ))}
      </nav>
      <div className="bg-linear-to-r from-[#f4f4f4] to-[#fafafa]">
        <div className="flex h-6 items-center gap-1.5 pl-1">
          <Tools ids="new open save | print | undo redo cut copy paste del | find replace findF replaceF | bm bmPrev bmNext bmClear | windows | gridNew" />
          <span className="-mr-1 -ml-1.5">{caret}</span>
          <Tools ids="page | build |" />
          <div className="relative -mr-0.5 shrink-0" style={{ fontFamily: SEGOE }}>
            <select aria-label="Active application" className="block h-[22px] w-[203px] appearance-none bg-white pl-1 text-[12px]">
              <option>Application [FMCP_M: PLC Logic]</option>
            </select>
            <span className="pointer-events-none absolute top-[9px] right-0.5">{caret}</span>
          </div>
          <Tools ids="login logout play stop wrench | st1 st2 st3 st4 st5 | arrow | flow | cart | chk lens" />
        </div>
        <div className="flex h-[26px] items-center gap-1.5 pl-0.5">
          <Tools ids="v1 v2 v3 | kb | rb rb | al ac ar | at am ab pic | h1 h2 h3 h4 | s1 s2 s3 s4 | w1 w2 w3 w4 | o1 o2 o3 o4 | g1 g2" />
        </div>
      </div>
      <main className="flex flex-1">
        <DeviceTree />
        <div className="w-[5px] shrink-0" />
        <div className="flex min-w-0 flex-1 flex-col border-l border-[#9a9a9a]">
          <DocTabs />
          <div className="flex h-1.5 justify-center border-y border-[#9a9a9a]">
            <Svg w={24} h={4} className="ml-36"><path d="M1 3.500l3-3 3 3" stroke="#999" /><path d="M15 0h8l-4 4z" fill="#888" /></Svg>
          </div>
          <Visualization />
        </div>
      </main>
    </div>
  );
}
